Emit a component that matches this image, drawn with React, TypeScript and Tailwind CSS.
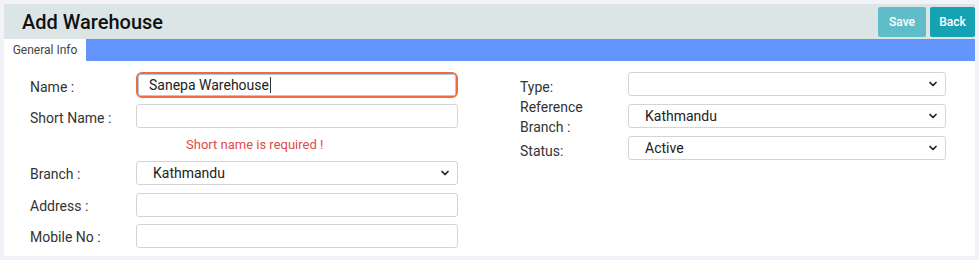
import { ChevronDown } from 'lucide-react';

type FieldProps = {
  label: React.ReactNode;
  children: React.ReactNode;
  className?: string;
  labelClass?: string;
};

function Field({ label, children, className = '', labelClass = '' }: FieldProps) {
  return (
    <div className={`flex h-[24px] items-center ${className}`}>
      <label className={`w-[106px] shrink-0 text-[14px] leading-[20px] text-[#333] ${labelClass}`}>{label}</label>
      <div className="flex-1">{children}</div>
    </div>
  );
}

function TextBox({ value = '', focused = false }: { value?: string; focused?: boolean }) {
  if (focused) {
    return (
      <div className="rounded-[6px] border-2 border-[#f36b3b]">
        <div className="flex h-[22px] items-center rounded-[3px] border border-[#a9c9f0] pl-[10px] text-[14px] text-[#222]">
          {value}
          <span className="ml-px h-[16px] w-px bg-[#333]" />
        </div>
      </div>
    );
  }
  return (
    <div className="flex h-[24px] items-center rounded-[3px] border border-[#d4d4d4] bg-white pl-[12px] text-[14px] text-[#222]">
      {value}
    </div>
  );
}

function SelectBox({ value = '' }: { value?: string }) {
  return (
    <div className="flex h-[24px] items-center justify-between rounded-[3px] border border-[#d4d4d4] bg-white pl-[16px] pr-[6px] text-[14px] text-[#222]">
      <span>{value}</span>
      <ChevronDown size={12} strokeWidth={3.5} className="text-[#222]" />
    </div>
  );
}

export default function App() {
  return (
    <div className="h-[260px] w-[979px] bg-[#f3f2f8] p-[4px]" style={{ fontFamily: 'Roboto, "Liberation Sans", sans-serif' }}>
      <div className="h-[252px] w-[971px] bg-white">
        <div className="flex h-[35px] items-center justify-between bg-[#dbe5e6] pl-[18px]">
          <h1 className="text-[20px] font-medium text-[#111]">Add Warehouse</h1>
          <div className="flex gap-[4px] self-start pt-[3px]">
            <button className="h-[30px] w-[48px] rounded-[2px] bg-[#5fbdca] text-[12px] font-medium text-white">Save</button>
            <button className="h-[30px] w-[45px] rounded-[2px] bg-[#17a2b4] text-[12px] font-medium text-white">Back</button>
          </div>
        </div>
        <div className="flex h-[22px] bg-[#6495fd]">
          <div className="flex w-[82px] items-center justify-center bg-white text-[12px] text-[#444]">General Info</div>
        </div>
        <div className="grid grid-cols-[428px_426px] gap-x-[62px] pl-[26px] pt-[10px]">
          <div className="flex flex-col">
            <Field label="Name :" className="h-[28px]" labelClass="pt-[4px]">
              <TextBox value="Sanepa Warehouse" focused />
            </Field>
            <Field label="Short Name :" className="mt-[5px]" labelClass="pt-[3px]">
              <TextBox />
            </Field>
            <div className="flex h-[33px] items-center pl-[156px] pt-[1px] text-[13px] text-[#e5484d]">
              Short name is required !
            </div>
            <Field label="Branch :" labelClass="pt-[2px]">
              <SelectBox value="Kathmandu" />
            </Field>
            <Field label="Address :" className="mt-[8px]" labelClass="pt-[2px]">
              <TextBox />
            </Field>
            <Field label="Mobile No :" className="mt-[7px]" labelClass="pt-[2px]">
              <TextBox />
            </Field>
          </div>
          <div className="flex flex-col pt-[1px]">
            <Field label="Type:" labelClass="w-[108px] pt-[6px]">
              <SelectBox />
            </Field>
            <Field
              label={
                <>
                  Reference
                  <br />
                  Branch :
                </>
              }
              className="mt-[8px]"
              labelClass="w-[108px] pt-[2px]"
            >
              <SelectBox value="Kathmandu" />
            </Field>
            <Field label="Status:" className="mt-[8px]" labelClass="w-[108px] pt-[6px]">
              <SelectBox value="Active" />
            </Field>
          </div>
        </div>
      </div>
    </div>
  );
}
